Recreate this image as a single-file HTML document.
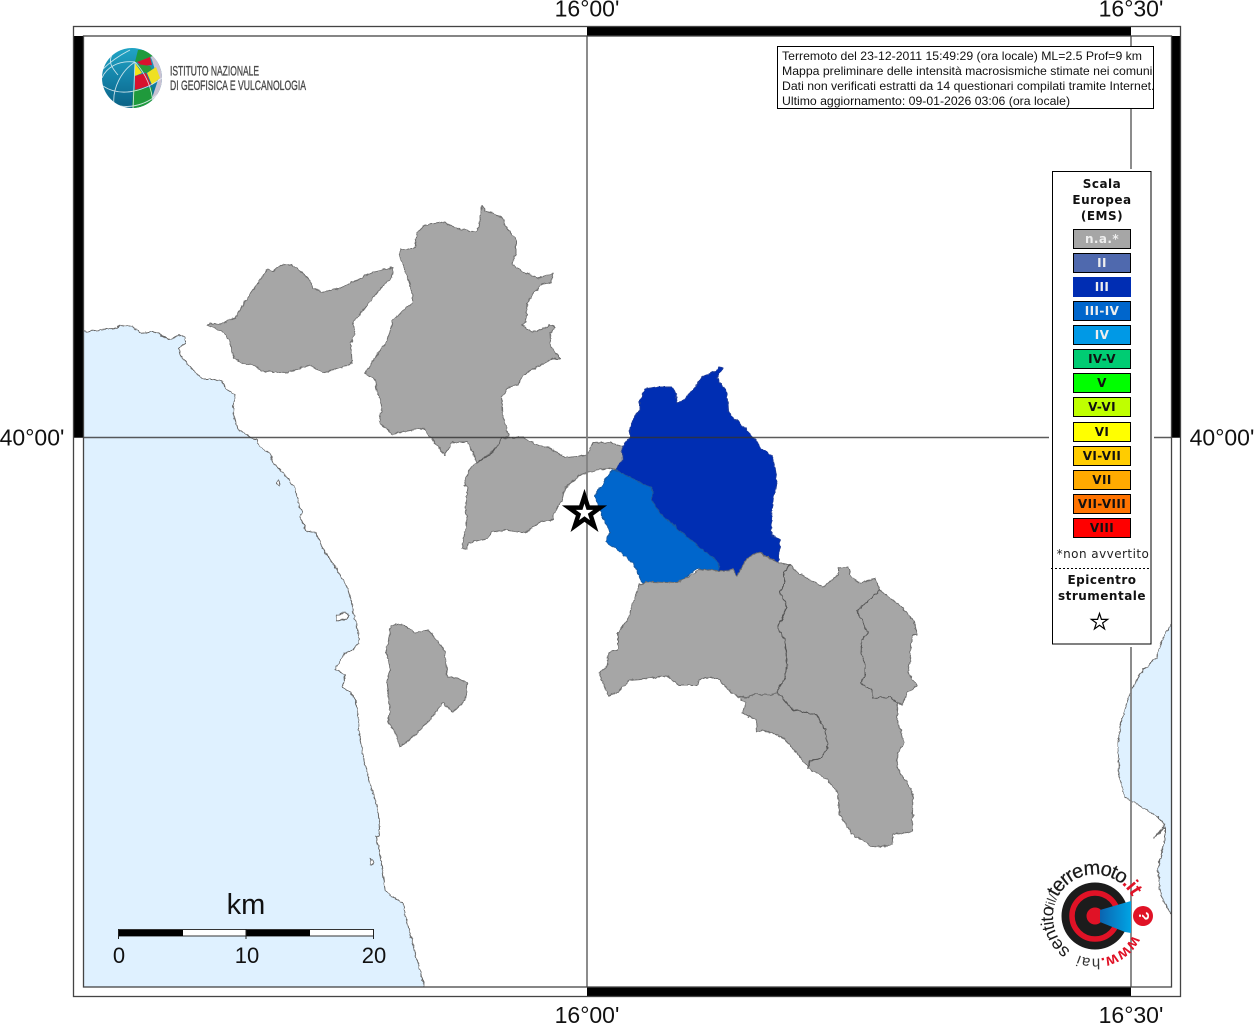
<!DOCTYPE html>
<html><head><meta charset="utf-8"><title>Mappa</title>
<style>
html,body{margin:0;padding:0;background:#fff}
svg{display:block}
text{font-family:"Liberation Sans",sans-serif}
.lab{font-size:23px;fill:#111;text-anchor:middle}
.num{font-size:22px;fill:#111;text-anchor:middle}
.info{font-size:12.25px;fill:#111}
.leg{font-family:"DejaVu Sans",sans-serif;font-weight:bold;font-size:12px;letter-spacing:.5px;text-anchor:middle;fill:#111}
.sw{font-family:"DejaVu Sans",sans-serif;font-weight:bold;font-size:12px;letter-spacing:.4px;text-anchor:middle;fill:#111}
.sww{fill:#eee}
.reg{fill:#a6a6a6;stroke:#6e6e6e;stroke-width:1;stroke-linejoin:round}
.bd{fill:none;stroke:#555;stroke-width:1;stroke-linejoin:round}
.sea{fill:#dff1ff;stroke:#666;stroke-width:1;stroke-linejoin:round}
</style></head>
<body>
<svg xmlns="http://www.w3.org/2000/svg" width="1254" height="1024" viewBox="0 0 1254 1024">
<defs>
<clipPath id="map"><rect x="83" y="36" width="1088" height="951"/></clipPath>
<clipPath id="gl"><circle cx="132" cy="78" r="30"/></clipPath>
<clipPath id="ib"><rect x="778" y="47" width="375.500" height="61"/></clipPath>
<linearGradient id="tg" x1="0" y1="0" x2="0" y2="1"><stop offset="0" stop-color="#22a6c6"/><stop offset=".55" stop-color="#137fa5"/><stop offset="1" stop-color="#0a5f82"/></linearGradient>
<linearGradient id="cn" x1="0" y1="0" x2="1" y2="0"><stop offset="0" stop-color="#0b64b0"/><stop offset="1" stop-color="#00a4e4"/></linearGradient>
<path id="arc" d="M1137 916A42 42 0 1 1 1136.990 915.500"/>
<filter id="rough" filterUnits="userSpaceOnUse" x="0" y="0" width="1254" height="1024">
<feTurbulence type="fractalNoise" baseFrequency=".22" numOctaves="2" seed="4" result="n"/>
<feDisplacementMap in="SourceGraphic" in2="n" scale="3.500" xChannelSelector="R" yChannelSelector="G" result="d"/>
<feGaussianBlur in="d" stdDeviation=".35"/>
</filter>
</defs>

<rect width="1254" height="1024" fill="#fff"/>

<g clip-path="url(#map)">
<g filter="url(#rough)">
<path class="sea" d="M70 333L100 330L113 329L120 326L125 325L132 326L136 330L140 333L147 332L153 332L160 334L164 337L168 339L175 338L179 334L185 338L185 343L179 348L180 355L187 363L195 372L203 379L212 379L222 381L225 388L235 394L233 412L238 429L250 437L257 440L260 447L270 453L273 462L283 473L295 488L297 497L300 508L302 513L300 518L307 531L316 533L322 547L337 570L347 587L352 603L353 613L358 630L359 643L353 650L345 653L337 666L335 669L345 675L343 687L355 697L358 715L360 740L365 765L370 783L378 810L380 835L376 837L379 850L382 867L385 890L392 897L403 903L406 918L410 933L415 952L420 970L427 1000L70 1000Z"/>
<path class="sea" d="M1185 610L1171 625L1163 638L1156 658L1143 670L1132 688L1125 708L1120 727L1118 743L1119 777L1125 797L1142 807L1158 817L1165 825L1154 838L1165 827L1165 840L1160 860L1158 867L1160 893L1170 913L1185 930Z"/>
<ellipse cx="278.500" cy="483" rx="1.500" ry="2" fill="#fff" stroke="#666"/>
<path d="M337 615L344 612L349 615L347 619L340 620L336 621Z" fill="#fff" stroke="#666"/>
<path d="M370 859L373 860L374 863L371 865Z" fill="#fff" stroke="#666"/>

<!-- regions -->
<path class="reg" d="M207 325L210 323L218 325L235 318L248 297L267 270L273 271L280 265L292 264L310 280L313 288L322 292L337 289L360 279L370 273L393 267L392 277L377 293L353 322L355 333L351 343L352 363L340 368L323 373L310 365L285 373L263 371L253 365L243 364L234 358L229 340L223 332Z"/>
<path class="reg" d="M482 205L485 210L502 218L507 228L516 240L516 253L512 264L523 272L538 278L553 273L551 283L540 285L527 303L526 322L522 325L532 332L540 330L550 325L555 327L550 333L551 347L561 359L552 359L523 375L518 385L508 387L502 397L503 417L509 436L502 438L497 448L485 457L477 463L468 442L452 442L445 455L430 437L423 428L392 434L379 422L382 407L377 390L375 380L365 373L382 347L387 342L393 320L412 303L413 295L407 275L399 255L401 250L415 248L417 233L425 225L445 222L453 227L475 232L478 230Z"/>
<path class="reg" d="M477 463L492 453L502 438L522 437L537 445L552 449L565 458L567 457L587 455L593 443L610 442L622 447L623 460L617 470L610 468L588 472L580 475L565 488L562 500L553 515L553 520L540 522L525 533L505 530L492 532L488 538L468 543L467 549L462 548L467 520L465 507L468 487L464 485L470 468Z"/>
<path class="reg" d="M390 628L394 624L403 625L410 629L415 633L428 630L437 640L445 652L447 677L458 678L467 683L465 700L453 712L443 703L427 723L407 742L400 747L395 732L388 722L390 712L387 680L390 670L386 652L389 640Z"/>
<path d="M645 389L657 387L672 387L676 393L677 403L682 402L693 390L702 377L713 372L720 367L723 368L717 378L727 393L728 412L747 430L763 450L773 457L777 483L772 507L771 535L780 539L778 562L758 552L747 560L737 576L732 569L718 571L687 537L660 513L652 500L652 488L615 470L623 460L622 447L630 437L630 428L635 415L640 410L640 400Z" fill="#002db3" stroke="#1c3a9a" stroke-width="1" stroke-linejoin="round"/>
<path d="M612 470L615 470L652 488L652 500L660 513L687 537L718 562L719 571L697 569L678 583L642 582L633 563L622 553L605 542L610 532L602 515L595 495Z" fill="#0066cc" stroke="#1b5a9e" stroke-width="1" stroke-linejoin="round"/>
<path class="reg" d="M639 585L645 582L653 582L677 583L700 570L718 571L733 570L737 576L747 558L758 552L777 562L790 565L783 573L785 582L780 592L787 607L778 628L785 640L787 663L785 678L777 692L772 695L755 694L745 698L733 694L717 678L705 678L699 680L698 685L678 685L667 676L650 678L630 680L618 692L608 696L599 673L607 667L609 652L618 650L618 633L629 618L632 605Z"/>
<path class="reg" d="M790 565L798 573L823 587L838 575L838 568L848 567L852 578L860 583L875 579L880 590L903 608L914 622L917 635L912 635L910 660L908 672L917 686L907 693L902 705L898 703L897 720L904 743L898 753L897 768L905 780L913 793L912 832L893 834L892 845L873 847L852 834L839 813L838 793L828 780L808 768L810 760L820 759L828 748L825 730L817 715L793 710L777 692L785 678L787 663L785 640L778 628L787 607L780 592L785 582L783 573Z"/>
<path class="reg" d="M772 695L777 692L793 710L817 715L825 730L828 748L820 759L810 760L808 767L790 745L782 737L763 730L757 732L756 720L742 713L746 703L735 695L745 698L755 694Z"/>
<path class="bd" d="M880 590L857 611L868 632L862 640L861 653L865 663L865 677L860 683L872 690L873 698L890 697L898 703"/>
<path class="bd" d="M790 565L783 573L785 582L780 592L787 607L778 628L785 640L787 663L785 678L777 692L793 710L817 715L825 730L828 748L820 759L810 760L808 767"/>
<path class="bd" d="M477 463L492 453L502 438"/>
</g>

<!-- graticule -->
<path d="M83 437.500H1171" stroke="#333" stroke-width="1.400" opacity=".8"/>
<path d="M587 36V987M1131 36V987" stroke="#808080" stroke-width="1.800"/>
</g>

<!-- star -->
<path transform="translate(584.500 512.700)" d="M0-16.500L3.700-5.100L15.690-5.100L6 1.950L9.700 13.350L0 6.300L-9.700 13.350L-6 1.950L-15.690-5.100L-3.700-5.100Z" fill="#fff" stroke="#000" stroke-width="4.500" stroke-miterlimit="10"/>

<!-- frame -->
<rect x="73" y="36" width="10" height="401" fill="#000"/>
<rect x="1171" y="36" width="10" height="401" fill="#000"/>
<rect x="587" y="26" width="544" height="10" fill="#000"/>
<rect x="587" y="987" width="544" height="10" fill="#000"/>
<g fill="none" stroke="#444" stroke-width="1.300">
<rect x="73.500" y="26.500" width="1107" height="970"/>
<rect x="83.500" y="36" width="1088" height="951"/>
</g>
<path d="M73 437.500H83M1171 437.500H1181" stroke="#444"/>

<!-- labels -->
<text class="lab" x="587" y="16.500">16°00'</text>
<text class="lab" x="1131" y="16.500">16°30'</text>
<text class="lab" x="587" y="1023">16°00'</text>
<text class="lab" x="1131" y="1023">16°30'</text>
<text class="lab" x="32" y="445.500">40°00'</text>
<text class="lab" x="1222" y="445.500">40°00'</text>

<!-- INGV logo -->
<g clip-path="url(#gl)">
<rect x="100" y="46" width="64" height="64" fill="url(#tg)"/>
<path d="M146 48L165 60L165 110L150 104L158 80L152 60Z" fill="#c9c3d3"/>
<path d="M135 62L138 50L146 50L153 56L150 57L137 62Z" fill="#1f9a3c"/>
<path d="M137 62L150 57L152 65L142 66Z" fill="#d8122e"/>
<path d="M135 63L142 73L135 76Z" fill="#f4e415"/>
<path d="M137 64L150 66L152 70L146 73L141 71Z" fill="#2a9a3a"/>
<path d="M135 76L146 73L151 85L135 90Z" fill="#d8122e"/>
<path d="M147 73L156 67L160 78L152 85Z" fill="#efe022"/>
<path d="M133 90L152 87L153 103L132 110Z" fill="#1f9a3c"/>
<path d="M153 102L160 95L158 104Z" fill="#d8122e"/>
<g fill="none" stroke="#e8f3f6" stroke-width=".9" opacity=".85">
<path d="M135 62L133 110"/>
<path d="M135 62C122 70 112 88 114 105"/>
<path d="M135 62C118 60 106 68 102 78"/>
<path d="M135 62C146 74 152 88 153 104"/>
<path d="M102 70C110 62 120 55 130 50"/>
<path d="M112 55C108 62 112 68 118 75"/>
<path d="M103 86C118 96 140 94 162 78"/>
<path d="M112 103C125 110 145 106 158 94"/>
</g>
</g>
<g fill="#484848" stroke="#484848" stroke-width=".35">
<text x="170" y="75.500" font-size="14" textLength="89" lengthAdjust="spacingAndGlyphs">ISTITUTO NAZIONALE</text>
<text x="170" y="90" font-size="14" textLength="136" lengthAdjust="spacingAndGlyphs">DI GEOFISICA E VULCANOLOGIA</text>
</g>

<!-- info box -->
<rect x="777.500" y="46.500" width="376" height="62" fill="#fff" stroke="#000"/>
<g clip-path="url(#ib)">
<text class="info" x="782" y="60">Terremoto del 23-12-2011 15:49:29 (ora locale) ML=2.5 Prof=9 km</text>
<text class="info" x="782" y="75">Mappa preliminare delle intensità macrosismiche stimate nei comuni</text>
<text class="info" x="782" y="90">Dati non verificati estratti da 14 questionari compilati tramite Internet.</text>
<text class="info" x="782" y="105">Ultimo aggiornamento: 09-01-2026 03:06 (ora locale)</text>
</g>

<!-- legend -->
<rect x="1049" y="169" width="105" height="478" fill="#fff"/>
<rect x="1052.500" y="171.500" width="98.500" height="472.500" fill="#fff" stroke="#000"/>
<text class="leg" x="1102" y="188">Scala</text>
<text class="leg" x="1102" y="204">Europea</text>
<text class="leg" x="1102" y="220">(EMS)</text>
<g stroke="#000">
<rect x="1073.500" y="229.500" width="57" height="19" fill="#a6a6a6"/>
<rect x="1073.500" y="253.500" width="57" height="19" fill="#4f69ae"/>
<rect x="1073.500" y="277.500" width="57" height="19" fill="#002db3" stroke="#002db3"/>
<rect x="1073.500" y="301.500" width="57" height="19" fill="#0066cc"/>
<rect x="1073.500" y="325.500" width="57" height="19" fill="#0099e6"/>
<rect x="1073.500" y="349.500" width="57" height="19" fill="#00cc73"/>
<rect x="1073.500" y="373.500" width="57" height="19" fill="#00ff00"/>
<rect x="1073.500" y="397.500" width="57" height="19" fill="#bfff00"/>
<rect x="1073.500" y="422.500" width="57" height="19" fill="#ffff00"/>
<rect x="1073.500" y="446.500" width="57" height="19" fill="#ffcc00"/>
<rect x="1073.500" y="470.500" width="57" height="19" fill="#ffaa00"/>
<rect x="1073.500" y="494.500" width="57" height="19" fill="#ff7300"/>
<rect x="1073.500" y="518.500" width="57" height="19" fill="#ff0000"/>
</g>
<text class="sw sww" x="1102" y="243">n.a.*</text>
<text class="sw sww" x="1102" y="267">II</text>
<text class="sw sww" x="1102" y="291">III</text>
<text class="sw sww" x="1102" y="315">III-IV</text>
<text class="sw sww" x="1102" y="339">IV</text>
<text class="sw" x="1102" y="363">IV-V</text>
<text class="sw" x="1102" y="387">V</text>
<text class="sw" x="1102" y="411">V-VI</text>
<text class="sw" x="1102" y="436">VI</text>
<text class="sw" x="1102" y="460">VI-VII</text>
<text class="sw" x="1102" y="484">VII</text>
<text class="sw" x="1102" y="508">VII-VIII</text>
<text class="sw" x="1102" y="532">VIII</text>
<text x="1103" y="558" style="font-family:'DejaVu Sans',sans-serif;font-size:12px;letter-spacing:.45px;text-anchor:middle;fill:#222">*non avvertito</text>
<path d="M1051 568.500H1150" stroke="#000" stroke-dasharray="2 2"/>
<text class="leg" x="1102" y="584">Epicentro</text>
<text class="leg" x="1102" y="600">strumentale</text>
<path transform="translate(1099.500 622) scale(.52)" d="M0-16.500L3.700-5.100L15.690-5.100L6 1.950L9.700 13.350L0 6.300L-9.700 13.350L-6 1.950L-15.690-5.100L-3.700-5.100Z" fill="#fff" stroke="#000" stroke-width="2.300" stroke-miterlimit="10"/>

<!-- scale bar -->
<text x="246" y="914" font-size="29" fill="#111" text-anchor="middle">km</text>
<rect x="118.500" y="929.500" width="255" height="6.500" fill="#fff" stroke="#333"/>
<rect x="119" y="930" width="64" height="6" fill="#000"/>
<rect x="246" y="930" width="64" height="6" fill="#000"/>
<path d="M118.500 929V939M246 929V939M373.500 929V939" stroke="#222"/>
<text class="num" x="119" y="963">0</text>
<text class="num" x="247" y="963">10</text>
<text class="num" x="374" y="963">20</text>

<!-- haisentito logo -->
<circle cx="1095" cy="916" r="33.500" fill="#1c1c1c"/>
<circle cx="1095" cy="916" r="23" fill="none" stroke="#e01226" stroke-width="5.500"/>
<circle cx="1095" cy="916" r="8.500" fill="#e01226"/>
<path d="M1100 910L1131 901V933L1125 932L1100 922Z" fill="url(#cn)"/>
<circle cx="1143" cy="916" r="10" fill="#e01226"/>
<text transform="translate(1139 916) rotate(90)" font-size="15" font-weight="bold" fill="#fff" text-anchor="middle">?</text>
<text font-size="16" font-weight="bold" fill="#e01226"><textPath href="#arc" startOffset="7.500%">www.</textPath></text>
<text font-size="15" fill="#333" letter-spacing=".8"><textPath href="#arc" startOffset="23.300%">hai</textPath></text>
<text font-size="18" fill="#1a1a1a" letter-spacing="-.6"><textPath href="#arc" startOffset="35.200%">sentito</textPath></text>
<text font-size="13" fill="#333"><textPath href="#arc" startOffset="53%">/il/</textPath></text>
<text font-size="20" fill="#1a1a1a" stroke="#1a1a1a" stroke-width=".2" letter-spacing="-1.200"><textPath href="#arc" startOffset="57.800%">terremoto</textPath></text>
<text font-size="20" font-weight="bold" fill="#e01226" letter-spacing="-.5"><textPath href="#arc" startOffset="86.200%">.it</textPath></text>
</svg>
</body></html>
